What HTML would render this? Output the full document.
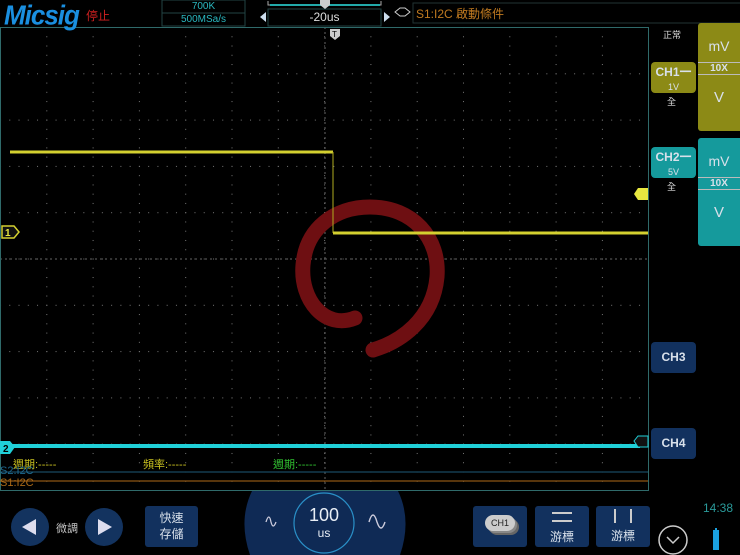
<!DOCTYPE html>
<html><head><meta charset="utf-8"><style>
body{margin:0;width:740px;height:555px;background:#000;overflow:hidden;position:relative;font-family:"Liberation Sans","Noto Sans CJK TC",sans-serif;}
.a{position:absolute}
.btn{position:absolute;background:#12315e;border-radius:3px;color:#d8e0ea;text-align:center}
</style></head><body>
<svg class="a" style="left:0;top:0" width="740" height="555">
<defs>
<pattern id="dv" width="46.3" height="9.26" patternUnits="userSpaceOnUse" x="0" y="27"><rect x="0" y="0" width="1" height="1" fill="#777"/></pattern>
<pattern id="dh" width="9.26" height="46.3" patternUnits="userSpaceOnUse" x="0" y="27"><rect x="0" y="0" width="1" height="1" fill="#777"/></pattern>
</defs>
<rect x="1" y="27" width="647" height="463" fill="url(#dv)"/>
<rect x="1" y="27" width="647" height="463" fill="url(#dh)"/>
<line x1="0" y1="259" x2="648" y2="259" stroke="#666" stroke-dasharray="2,3"/>
<line x1="325" y1="27" x2="325" y2="490" stroke="#666" stroke-dasharray="2,3"/>
<rect x="0.5" y="27.5" width="648" height="463" fill="none" stroke="#2f6a6a"/>
<!-- swirl -->
<path d="M355 318 C325 330 300 300 303 265 C306 228 335 207 370 207 C413 207 440 238 437 277 C433 320 400 342 373 350" fill="none" stroke="#6e0f12" stroke-width="15" stroke-linecap="round"/>
<!-- yellow trace -->
<line x1="10" y1="152" x2="333" y2="152" stroke="#d4d030" stroke-width="3"/>
<line x1="333" y1="152" x2="333" y2="233" stroke="#b0ad20" stroke-width="1"/>
<line x1="333" y1="233" x2="648" y2="233" stroke="#d4d030" stroke-width="3"/>
<!-- cyan trace -->
<line x1="0" y1="446" x2="640" y2="446" stroke="#20d0d8" stroke-width="4"/>
<line x1="0" y1="472" x2="648" y2="472" stroke="#1e5a78" stroke-width="1"/>
<line x1="0" y1="481" x2="648" y2="481" stroke="#b06a18" stroke-width="1"/>
<!-- markers -->
<path d="M2 226 H14 L19 232 L14 238 H2Z" fill="#111" stroke="#d4d030" stroke-width="1.5"/>
<text x="5" y="236" font-size="10" font-weight="bold" fill="#e8e840">1</text>
<path d="M0 441 H10 L15 447 L10 454 H0Z" fill="#20d0d8"/>
<text x="3" y="452" font-size="10" font-weight="bold" fill="#000">2</text>
<path d="M648 188 H638 L634 194 L638 200 H648Z" fill="#e8e840"/>
<path d="M648 436 H638 L634 441 L638 447 H648Z" fill="#111" stroke="#20d0d8"/>
<path d="M330 29 H340 V36 L335 40 L330 36Z" fill="#ccc"/>
<text x="332" y="37" font-size="8" fill="#000">T</text>
<!-- top bar -->
<rect x="162" y="0" width="83" height="26" fill="none" stroke="#244"/>
<line x1="162" y1="13" x2="245" y2="13" stroke="#244"/>
<rect x="268" y="9" width="113" height="17" fill="none" stroke="#244"/>
<path d="M268 1 V5 H381 V1" fill="none" stroke="#aaa"/>
<line x1="270" y1="5" x2="380" y2="5" stroke="#2aa" stroke-width="2"/>
<path d="M320 0 H330 V5 L325 9 L320 5Z" fill="#ccc"/>
<path d="M266 12 L260 17 L266 22Z" fill="#cde"/>
<path d="M384 12 L390 17 L384 22Z" fill="#cde"/>
<path d="M395 12 L400 8 H405 L410 12 L405 16 H400Z" fill="none" stroke="#ccc"/>
<rect x="413" y="3" width="330" height="20" fill="none" stroke="#233"/>
<!-- bottom dial -->
<path d="M250 555 Q238 520 252 491 H398 Q412 520 400 555Z" fill="#0f2a55"/>
<circle cx="324" cy="523" r="30" fill="#0f2a55" stroke="#2a90c8" stroke-width="1.2"/>
<path d="M266 522 q3 -10 5 0 q2 8 5 0" fill="none" stroke="#ccd" stroke-width="1.3"/>
<path d="M369 522 q4 -14 8 0 q4 12 8 0" fill="none" stroke="#ccd" stroke-width="1.4"/>
<circle cx="30" cy="527" r="19" fill="#13335f"/>
<path d="M22 527 L36 519 V535Z" fill="#dde"/>
<circle cx="104" cy="527" r="19" fill="#13335f"/>
<path d="M112 527 L98 519 V535Z" fill="#dde"/>
<circle cx="673" cy="540" r="14" fill="none" stroke="#ccc" stroke-width="1.5"/>
<path d="M667 537 L673 543 L679 537" fill="none" stroke="#ccc" stroke-width="1.5"/>
<rect x="713" y="530" width="6" height="20" fill="#1aa0e0"/><rect x="715" y="528" width="2" height="2" fill="#1aa0e0"/>
</svg>
<div class="a" style="left:4px;top:0px;font-size:26px;font-weight:900;font-style:italic;color:#1a8fe0;letter-spacing:-1px;transform:scaleY(1.05)">Micsig</div>
<div class="a" style="left:86px;top:7px;font-size:12px;color:#d02020">停止</div>
<div class="a" style="left:162px;top:0;width:83px;text-align:center;font-size:10px;color:#2ab8c0;line-height:13px">700K<br>500MSa/s</div>
<div class="a" style="left:268px;top:10px;width:113px;text-align:center;font-size:12px;color:#ddd">-20us</div>
<div class="a" style="left:416px;top:5px;font-size:12px;color:#c07a20">S1:I2C 啟動條件</div>
<div class="a" style="left:663px;top:28px;font-size:9px;color:#ddd">正常</div>
<div class="btn" style="left:698px;top:23px;width:42px;height:108px;background:#8c8a16;border-radius:3px 0 0 3px;font-size:14px"><div style="margin-top:15px">mV</div><div style="margin-top:8px;border-top:1px solid #bbb;border-bottom:1px solid #bbb;font-size:10px;font-weight:bold">10X</div><div style="margin-top:14px;font-size:15px">V</div></div>
<div class="btn" style="left:698px;top:138px;width:42px;height:108px;background:#159a9c;border-radius:3px 0 0 3px;font-size:14px"><div style="margin-top:15px">mV</div><div style="margin-top:8px;border-top:1px solid #bbb;border-bottom:1px solid #bbb;font-size:10px;font-weight:bold">10X</div><div style="margin-top:14px;font-size:15px">V</div></div>
<div class="btn" style="left:651px;top:62px;width:45px;height:31px;background:#8c8a16;border-radius:4px;font-size:12px;font-weight:bold;line-height:14px;padding-top:3px;box-sizing:border-box">CH1一<br><span style="font-size:9px;font-weight:normal">1V</span></div>
<div class="a" style="left:667px;top:95px;font-size:9px;color:#ddd">全</div>
<div class="btn" style="left:651px;top:147px;width:45px;height:31px;background:#159a9c;border-radius:4px;font-size:12px;font-weight:bold;line-height:14px;padding-top:3px;box-sizing:border-box">CH2一<br><span style="font-size:9px;font-weight:normal">5V</span></div>
<div class="a" style="left:667px;top:180px;font-size:9px;color:#ddd">全</div>
<div class="btn" style="left:651px;top:342px;width:45px;height:31px;border-radius:4px;font-size:12px;font-weight:bold;line-height:31px">CH3</div>
<div class="btn" style="left:651px;top:428px;width:45px;height:31px;border-radius:4px;font-size:12px;font-weight:bold;line-height:31px">CH4</div>
<div class="a" style="left:13px;top:456px;font-size:11px;color:#c8c020">週期:-----</div>
<div class="a" style="left:143px;top:456px;font-size:11px;color:#c8c020">頻率:-----</div>
<div class="a" style="left:273px;top:456px;font-size:11px;color:#30c030">週期:-----</div>
<div class="a" style="left:0px;top:465px;font-size:11px;color:#1e6a90">S2:I2C</div>
<div class="a" style="left:0px;top:477px;font-size:11px;color:#a86818;height:12px;overflow:hidden">S1:I2C</div>
<div class="a" style="left:56px;top:520px;font-size:11px;color:#ccc">微調</div>
<div class="btn" style="left:145px;top:506px;width:53px;height:41px;font-size:12px;line-height:16px;padding-top:4px;box-sizing:border-box">快速<br>存儲</div>
<div class="a" style="left:294px;top:507px;width:60px;text-align:center;color:#e8eef5;font-size:18px;line-height:16px">100<br><span style="font-size:12px">us</span></div>
<div class="btn" style="left:473px;top:506px;width:54px;height:41px"><div style="margin:9px auto 0;width:30px;height:16px;background:#ccc;border-radius:8px;color:#222;font-size:9px;line-height:16px;box-shadow:2px 2px 0 #888,4px 4px 0 #666">CH1</div></div>
<div class="btn" style="left:535px;top:506px;width:54px;height:41px;font-size:12px"><div style="margin:6px auto 0;width:20px;height:6px;border-top:2px solid #ccc;border-bottom:2px solid #ccc"></div><div style="margin-top:6px">游標</div></div>
<div class="btn" style="left:596px;top:506px;width:54px;height:41px;font-size:12px"><div style="margin:3px auto 0;width:14px;height:14px;border-left:2px solid #ccc;border-right:2px solid #ccc"></div><div style="margin-top:4px">游標</div></div>
<div class="a" style="left:703px;top:501px;font-size:12px;color:#2a9a9a">14:38</div>
</body></html>
